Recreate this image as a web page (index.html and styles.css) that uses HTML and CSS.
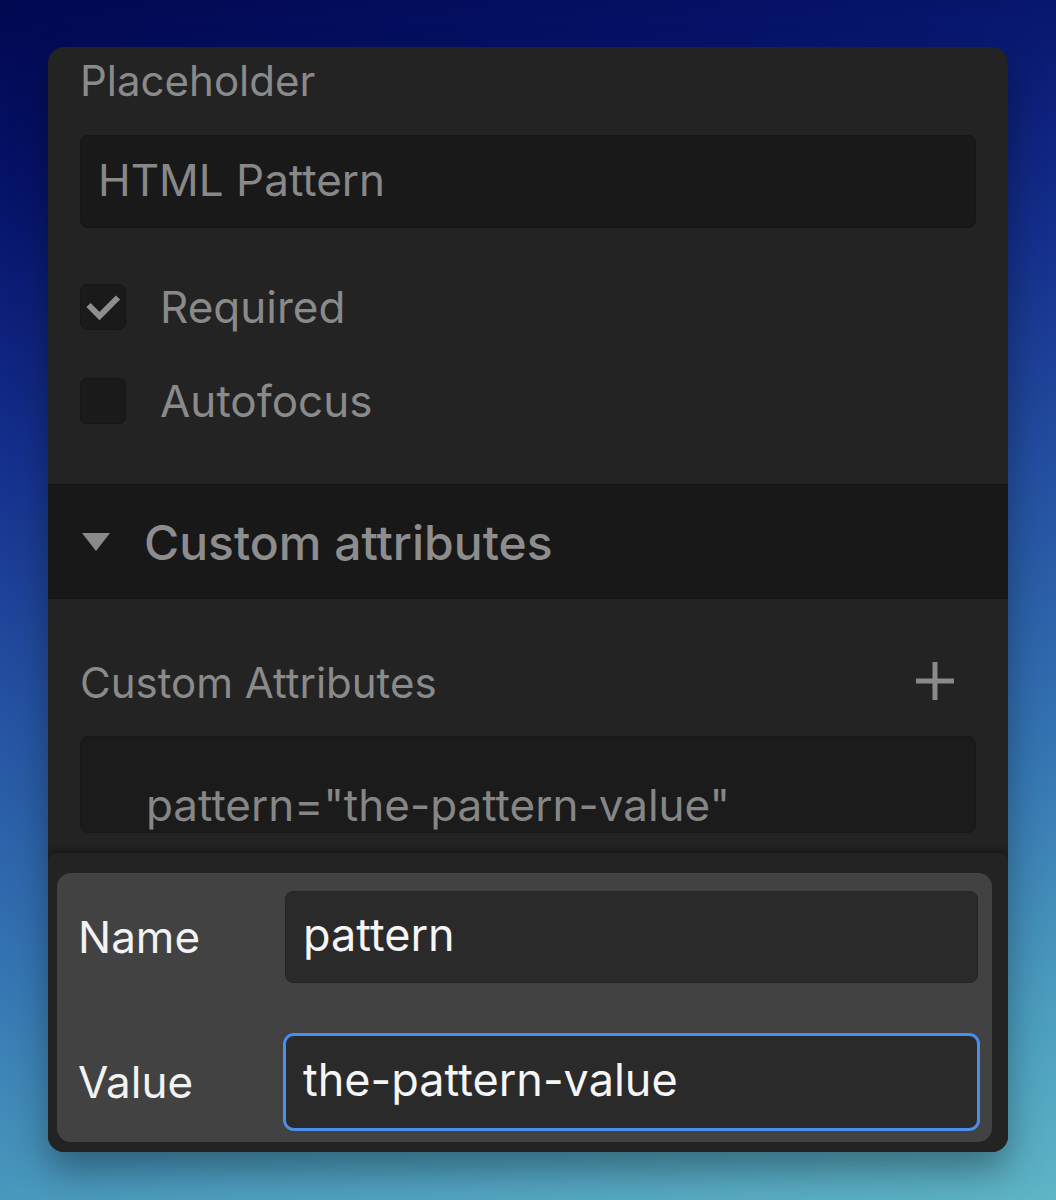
FILE: index.html
```html
<!DOCTYPE html>
<html lang="en">

<head>
  <meta charset="UTF-8">
  <meta name="viewport" content="width=device-width, initial-scale=1.0">
  <title>Custom attributes</title>

  <link rel="stylesheet" href="styles.css">
</head>

<body>
  <div class="panel">
    <div class="settings">
      <div class="label">Placeholder</div>
      <div class="input dark">HTML Pattern</div>

      <div class="check-row first">
        <span class="checkbox">
          <svg width="46" height="46" viewBox="0 0 46 46">
            <polyline points="8.5,21 19.5,32 38,13.5" fill="none" stroke="#8e8e8e" stroke-width="6" />
          </svg>
        </span>
        <span class="check-text">Required</span>
      </div>
      <div class="check-row">
        <span class="checkbox"></span>
        <span class="check-text">Autofocus</span>
      </div>
    </div>

    <div class="section-head">
      <svg class="caret" width="28" height="18" viewBox="0 0 28 18">
        <polygon points="0,0 28,0 14,18" fill="#8a8a8a" />
      </svg>
      <span>Custom attributes</span>
    </div>

    <div class="attributes">
      <div class="attr-top">
        <span class="label">Custom Attributes</span>
        <svg class="plus" width="38" height="38" viewBox="0 0 38 38">
          <path d="M19 0V38M0 19H38" stroke="#8a8a8a" stroke-width="5" />
        </svg>
      </div>
      <div class="attr-list">
        <div class="attr-item">pattern="the-pattern-value"</div>
      </div>
    </div>

    <!-- 속성 편집 팝오버 -->
    <div class="popover">
      <div class="popover-card">
        <div class="pop-label">Name</div>
        <div class="pop-input">pattern</div>
        <div class="pop-label">Value</div>
        <div class="pop-input focused">the-pattern-value</div>
      </div>
    </div>
  </div>
</body>

</html>
```

FILE: styles.css
```css
html {
  font-size: 44px;
}

body {
  margin: 0;
  height: 1200px;
  overflow: hidden;
  font-family: Inter, "Noto Sans", sans-serif;
  background: linear-gradient(168deg, #020850 0%, #06136a 14%, #142f8c 32%, #2552a2 50%, #3474b2 68%, #4b9cbe 86%, #5fb4c6 100%);
}

.panel {
  width: 960px;
  height: 1105px;
  margin: 47px 0 0 48px;
  background-color: #232323;
  border-radius: 16px;
  overflow: hidden;
  box-shadow: 0 18px 36px rgba(0, 0, 0, 0.35);
  display: flex;
  flex-direction: column;
}

/* 회색 라벨은 조금 작게 */
.label {
  color: #8a8a8a;
  font-size: 42px;
  line-height: 52px;
}

.settings {
  padding: 8px 32px 0;
  height: 429px;
  flex-shrink: 0;
}

.input {
  height: 93px;
  box-sizing: border-box;
  margin-top: 28px;
  padding: 0 17px;
  border-radius: 8px;
  display: flex;
  align-items: center;
  line-height: 52px;
}

.input.dark {
  background-color: #191919;
  border: 1px solid #151515;
  color: #888;
  padding-bottom: 4px;
}

.check-row {
  display: flex;
  align-items: center;
  height: 46px;
  margin-top: 48px;
}

.check-row.first {
  margin-top: 56px;
}

.checkbox {
  width: 46px;
  height: 46px;
  box-sizing: border-box;
  background-color: #1a1a1a;
  border: 1px solid #161616;
  border-radius: 7px;
  display: flex;
  align-items: center;
  justify-content: center;
}

.checkbox svg {
  margin: -1px;
}

.check-text {
  margin-left: 34px;
  color: #8a8a8a;
  line-height: 52px;
}

.section-head {
  height: 115px;
  flex-shrink: 0;
  box-sizing: border-box;
  background-color: #181818;
  border-top: 1px solid #121212;
  border-bottom: 1px solid #161616;
  display: flex;
  align-items: center;
  padding-left: 34px;
  font-size: 48px;
  font-weight: 500;
  color: #8d8d8d;
}

.section-head span {
  margin-left: 34px;
  line-height: 56px;
  padding-top: 3px;
}

.attributes {
  padding: 0 32px;
  flex-shrink: 0;
}

.attr-top {
  display: flex;
  align-items: center;
  justify-content: space-between;
  margin-top: 54px;
  padding-right: 22px;
}

.attr-top .label {
  padding-top: 4px;
}

.attr-list {
  margin-top: 27px;
  height: 97px;
  box-sizing: border-box;
  background-color: #1b1b1b;
  border: 1px solid #181818;
  border-radius: 8px;
  overflow: hidden;
}

.attr-item {
  padding: 42px 0 0 65px;
  line-height: 52px;
  color: #868686;
}

.popover {
  margin-top: 20px;
  flex: 1;
  background-color: #232323;
  border-radius: 8px 8px 0 0;
  box-shadow: 0 -3px 6px rgba(0, 0, 0, 0.35);
  padding: 20px 16px 10px 9px;
}

.popover-card {
  height: 269px;
  box-sizing: border-box;
  background-color: #424242;
  border-radius: 14px;
  padding: 18px 14px 0 21px;
  display: grid;
  grid-template-columns: 207px 1fr;
  row-gap: 52px;
  align-items: center;
  align-content: start;
}

.pop-label {
  color: #f2f2f2;
  line-height: 52px;
}

.pop-input {
  height: 92px;
  box-sizing: border-box;
  padding: 0 17px 4px;
  background-color: #2a2a2a;
  border: 1px solid #252525;
  border-radius: 8px;
  display: flex;
  align-items: center;
  color: #f5f5f5;
  font-size: 45px;
  line-height: 52px;
}

.pop-input.focused {
  height: 94px;
  border: 1px solid #4a8ff0;
  box-shadow: 0 0 0 2px #4a8ff0;
  border-radius: 9px;
}
```
